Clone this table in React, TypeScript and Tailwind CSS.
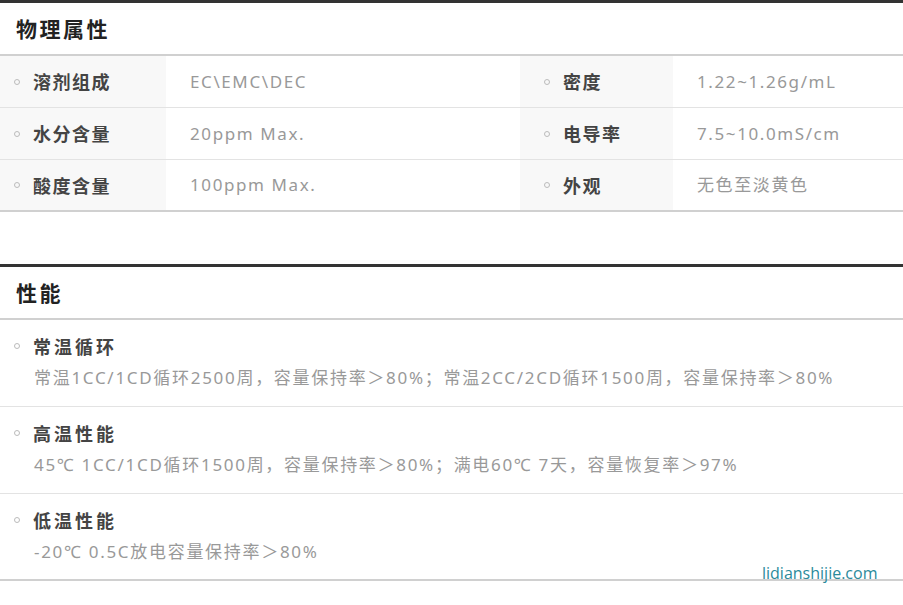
import React from "react";

const cjk = { fontFamily: '"Noto Sans CJK SC", "Noto Sans", sans-serif' };
const mixed = { fontFamily: '"Noto Sans", "Noto Sans CJK SC", sans-serif' };

function Bullet() {
  return <span className="inline-block w-[6px] h-[6px] rounded-full border border-[#bbb] mr-[13px] shrink-0" />;
}

function PropRow({ l1, v1, l2, v2, last }: { l1: string; v1: string; l2: string; v2: string; last?: boolean }) {
  return (
    <div className={`flex h-[52px] ${last ? "border-b-2 border-[#d0d0d0]" : "border-b border-[#e3e3e3]"}`}>
      <div className="w-[166px] bg-[#f8f8f8] flex items-center pl-[14px]">
        <Bullet />
        <span className="text-[18px] font-bold text-[#444] tracking-[1.5px]">{l1}</span>
      </div>
      <div className="w-[354px] flex items-center pl-[24px] text-[17px] text-[#999] tracking-[1.6px]" style={mixed}>
        {v1}
      </div>
      <div className="w-[153px] bg-[#f8f8f8] flex items-center pl-[24px]">
        <Bullet />
        <span className="text-[18px] font-bold text-[#444] tracking-[1.5px]">{l2}</span>
      </div>
      <div className="flex-1 flex items-center pl-[24px] text-[17px] text-[#999] tracking-[1.6px]" style={mixed}>
        {v2}
      </div>
    </div>
  );
}

function PerfRow({ title, desc, last }: { title: string; desc: string; last?: boolean }) {
  return (
    <div className={`h-[87px] pl-[14px] pt-[13px] ${last ? "border-b-2 border-[#d0d0d0]" : "border-b border-[#e3e3e3]"}`}>
      <div className="flex items-center h-[26px]">
        <Bullet />
        <span className="text-[18px] font-bold text-[#444] tracking-[3px]">{title}</span>
      </div>
      <div className="pl-[20px] mt-[7px] text-[17px] text-[#999] tracking-[1.7px] leading-[24px] whitespace-nowrap" style={mixed}>
        {desc}
      </div>
    </div>
  );
}

export default function App() {
  return (
    <div className="w-[903px] h-[605px] bg-white relative overflow-hidden" style={cjk}>
      <div className="border-t-[3px] border-[#333]">
        <div className="h-[53px] flex items-center pl-[16px] border-b-2 border-[#d0d0d0]">
          <span className="text-[21px] font-bold text-[#222] tracking-[2.5px]">物理属性</span>
        </div>
        <PropRow l1="溶剂组成" v1="EC\EMC\DEC" l2="密度" v2="1.22~1.26g/mL" />
        <PropRow l1="水分含量" v1="20ppm Max." l2="电导率" v2="7.5~10.0mS/cm" />
        <PropRow l1="酸度含量" v1="100ppm Max." l2="外观" v2="无色至淡黄色" last />
      </div>
      <div className="mt-[52px] border-t-[3px] border-[#333]">
        <div className="h-[53px] flex items-center pl-[16px] border-b-2 border-[#d0d0d0]">
          <span className="text-[21px] font-bold text-[#222] tracking-[2.5px]">性能</span>
        </div>
        <PerfRow
          title="常温循环"
          desc="常温1CC/1CD循环2500周，容量保持率＞80%；常温2CC/2CD循环1500周，容量保持率＞80%"
        />
        <PerfRow title="高温性能" desc="45℃ 1CC/1CD循环1500周，容量保持率＞80%；满电60℃ 7天，容量恢复率＞97%" />
        <PerfRow title="低温性能" desc="-20℃ 0.5C放电容量保持率＞80%" last />
      </div>
      <div
        className="absolute left-[762px] top-[561px] text-[16px] text-[#2b8a9b]"
        style={{ fontFamily: '"Open Sans", sans-serif' }}
      >
        lidianshijie.com
      </div>
    </div>
  );
}
